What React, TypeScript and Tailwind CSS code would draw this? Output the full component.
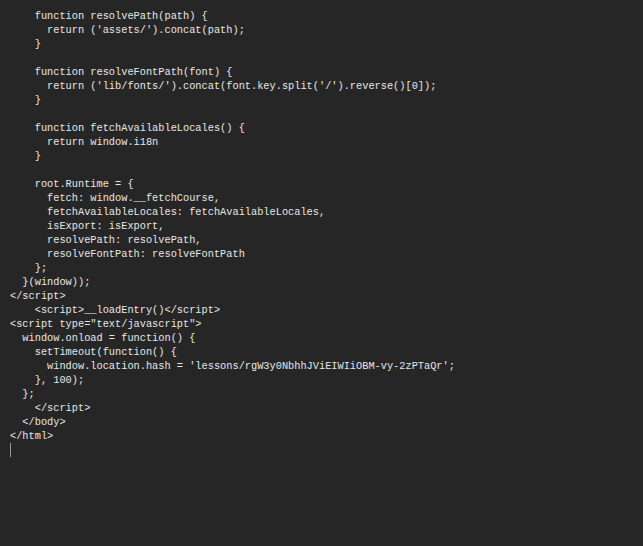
import React from 'react';

const LINES: string[] = [
  '    function resolvePath(path) {',
  "      return ('assets/').concat(path);",
  '    }',
  '',
  '    function resolveFontPath(font) {',
  "      return ('lib/fonts/').concat(font.key.split('/').reverse()[0]);",
  '    }',
  '',
  '    function fetchAvailableLocales() {',
  '      return window.i18n',
  '    }',
  '',
  '    root.Runtime = {',
  '      fetch: window.__fetchCourse,',
  '      fetchAvailableLocales: fetchAvailableLocales,',
  '      isExport: isExport,',
  '      resolvePath: resolvePath,',
  '      resolveFontPath: resolveFontPath',
  '    };',
  '  }(window));',
  '</script>',
  '    <script>__loadEntry()</script>',
  '<script type="text/javascript">',
  '  window.onload = function() {',
  '    setTimeout(function() {',
  "      window.location.hash = 'lessons/rgW3y0NbhhJViEIWIiOBM-vy-2zPTaQr';",
  '    }, 100);',
  '  };',
  '    </script>',
  '  </body>',
  '</html>',
];

export default function App() {
  return (
    <div className="w-[643px] h-[546px] bg-[#262626] overflow-hidden">
      <div className="pt-[9px] pl-[10px] font-['Liberation_Mono',monospace] text-[10.3px] leading-[14px] text-[#e6e6e6]">
        {LINES.map((line, i) => (
          <div key={i} className="whitespace-pre h-[14px]">
            {line}
          </div>
        ))}
        {/* caret */}
        <div className="h-[14px] flex items-center">
          <div className="w-px h-[14px] bg-[#9a9a9a]" />
        </div>
      </div>
    </div>
  );
}
